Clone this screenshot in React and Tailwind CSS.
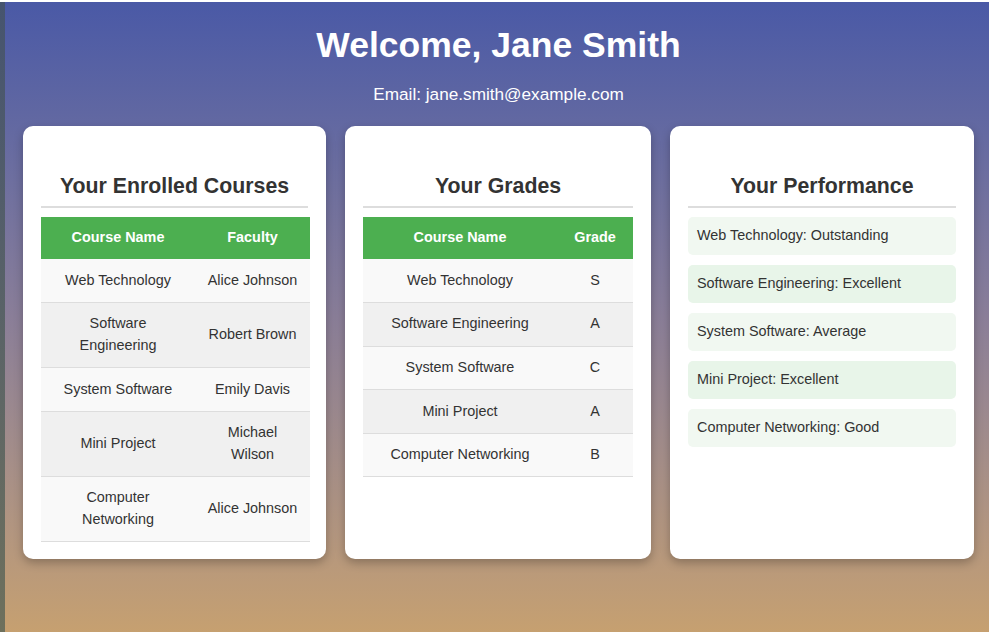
import React from "react";

const courses = [
  ["Web Technology", "Alice Johnson"],
  ["Software Engineering", "Robert Brown"],
  ["System Software", "Emily Davis"],
  ["Mini Project", "Michael Wilson"],
  ["Computer Networking", "Alice Johnson"],
];

const grades = [
  ["Web Technology", "S"],
  ["Software Engineering", "A"],
  ["System Software", "C"],
  ["Mini Project", "A"],
  ["Computer Networking", "B"],
];

const perf = [
  "Web Technology: Outstanding",
  "Software Engineering: Excellent",
  "System Software: Average",
  "Mini Project: Excellent",
  "Computer Networking: Good",
];

function Card({ title, className, children }) {
  return (
    <div className={"shrink-0 bg-white rounded-[10px] shadow-[0_4px_10px_rgba(0,0,0,0.25)] px-[18px] pt-[48px] pb-[17px] " + className}>
      <h2 className="text-[21.3px] leading-[24px] font-bold text-[#333] text-center pb-[8px] border-b-2 border-[#ddd] mb-[9px]">
        {title}
      </h2>
      {children}
    </div>
  );
}

function Table({ headers, rows, widths }) {
  return (
    <table className="w-full table-fixed border-collapse text-[14.4px] leading-[21.6px] text-[#333]">
      <colgroup>
        <col style={{ width: widths[0] }} />
        <col style={{ width: widths[1] }} />
      </colgroup>
      <thead>
        <tr className="bg-[#4caf50] text-white">
          {headers.map((h) => (
            <th key={h} className="font-bold text-center px-[10.8px] py-[10.4px]">
              {h}
            </th>
          ))}
        </tr>
      </thead>
      <tbody>
        {rows.map((r, i) => (
          <tr key={i} className={i % 2 === 0 ? "bg-[#f9f9f9]" : "bg-[#f0f0f0]"}>
            {r.map((c, j) => (
              <td key={j} className="text-center px-[10.8px] py-[10.5px] border-b border-[#ddd]">
                {c}
              </td>
            ))}
          </tr>
        ))}
      </tbody>
    </table>
  );
}

export default function App() {
  return (
    <div className="w-[989px] h-[632px] overflow-hidden flex flex-col font-['Liberation_Sans',Arial,sans-serif]">
      <div className="h-[2px] bg-white shrink-0" />
      <div className="flex flex-1">
        <div className="w-[5px] shrink-0 bg-gradient-to-b from-[#46546f] to-[#6e705c]" />
        <div className="flex-1 bg-gradient-to-b from-[#4a59a6] via-[#8a7e98] to-[#c6a070] pl-[18px] pr-[15px]">
          <h1 className="text-[35.5px] leading-[40px] font-bold text-white text-center mt-[23px]">
            Welcome, Jane Smith
          </h1>
          <p className="text-[17.2px] leading-[20px] text-white text-center mt-[19px]">
            Email: jane.smith@example.com
          </p>
          <div className="flex gap-[19px] mt-[22px] items-stretch">
            <Card title="Your Enrolled Courses" className="w-[303px]">
              <Table headers={["Course Name", "Faculty"]} rows={courses} widths={["154px", "115px"]} />
            </Card>
            <Card title="Your Grades" className="w-[306px]">
              <Table headers={["Course Name", "Grade"]} rows={grades} widths={["194px", "76px"]} />
            </Card>
            <Card title="Your Performance" className="w-[304px]">
              <div className="flex flex-col gap-[10px]">
                {perf.map((p, i) => (
                  <div
                    key={p}
                    className={
                      "rounded-[5px] px-[9px] py-[8.2px] text-[14.4px] leading-[21.6px] text-[#333] " +
                      (i % 2 === 0 ? "bg-[#f1f8f1]" : "bg-[#e8f5e9]")
                    }
                  >
                    {p}
                  </div>
                ))}
              </div>
            </Card>
          </div>
        </div>
      </div>
    </div>
  );
}
